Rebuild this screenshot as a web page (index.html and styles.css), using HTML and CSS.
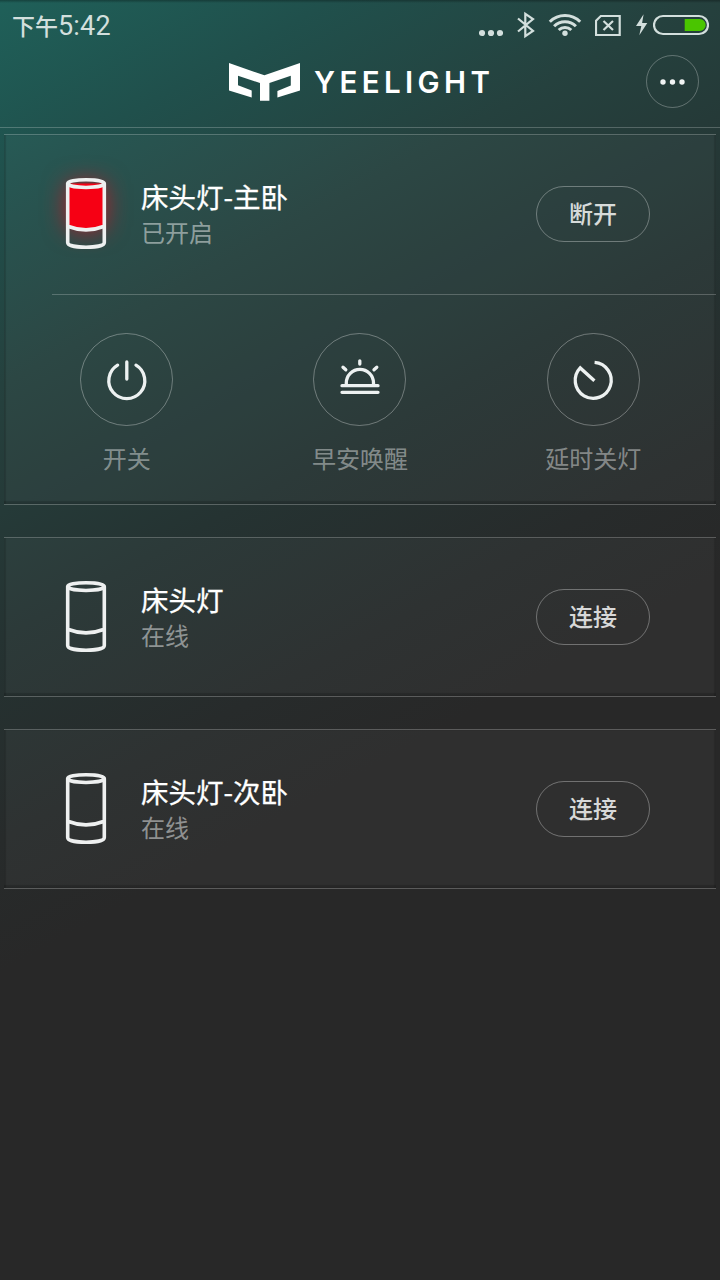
FILE: index.html
```html
<!DOCTYPE html>
<html lang="zh-CN">
<head>
    <meta charset="UTF-8">
    <meta name="viewport" content="width=device-width, initial-scale=1.0">
    <title>Yeelight</title>
    <link rel="stylesheet" href="styles.css">
</head>
<body>
    <!-- Status bar -->
    <div class="status-bar">
        <div class="time">下午<span>5:42</span></div>
        <div class="status-icons">
            <svg class="dots" width="24" height="50" viewBox="479 0 24 50">
                <circle cx="482" cy="33" r="3.1"/><circle cx="491" cy="33" r="3.1"/><circle cx="500" cy="33" r="3.1"/>
            </svg>
            <svg class="bluetooth line" width="18" height="50" viewBox="517 0 18 50">
                <path d="M518 18.5l15 12.5-7.7 5.2V13.8l7.7 5.2-15 12.5"/>
            </svg>
            <svg class="wifi" width="34" height="50" viewBox="547.5 0 34 50">
                <circle cx="564.5" cy="33.3" r="2.7"/>
                <path class="arc" d="M549.3 21.8a21.5 21.5 0 0 1 30.4 0M553.6 26.2a15.4 15.4 0 0 1 21.8 0M558.2 30a9 9 0 0 1 12.6 0"/>
            </svg>
            <svg class="sim line" width="26" height="50" viewBox="595 0 26 50">
                <path d="M596 20.8l4.8-4.8h18.9v19h-23.7zM603.5 21l9.5 9M613 21l-9.5 9"/>
            </svg>
            <svg class="bolt" width="12" height="50" viewBox="636 0 12 50">
                <path d="M643.6 14.3l-7.6 11.7h5.3l-2 9.2 8-12.2h-5.2z"/>
            </svg>
            <svg class="battery line" width="56" height="50" viewBox="653 0 56 50">
                <rect x="654" y="16" width="54" height="18" rx="9"/>
                <path class="level" d="M684.7 19h15a6 6 0 0 1 0 12h-15z"/>
            </svg>
        </div>
    </div>

    <!-- Header -->
    <div class="header">
        <div class="logo">
            <svg width="71" height="38" viewBox="0 0 71 38">
                <path d="M0 0l35.4 12.3L71 0v27.6L48.4 34.4V28l13.4-5.6v-9.6L40.4 20v17.8H31V20L9 12.8v9.4L22.7 27.6v6.8L0 27.4z"/>
            </svg>
            <span class="logo-text">YEELIGHT</span>
        </div>
        <button class="more">
            <svg width="25" height="6" viewBox="0 0 25 6">
                <circle cx="3" cy="3" r="2.7"/><circle cx="12.5" cy="3" r="2.7"/><circle cx="22" cy="3" r="2.7"/>
            </svg>
        </button>
    </div>

    <!-- Device list -->
    <div class="devices">
        <div class="card">
            <div class="device">
                <svg class="lamp" width="40" height="71" viewBox="0 0 40 71">
                    <path class="light" d="M1.5 5.5V48.5Q20 56 38.5 48.5V5.5z"/>
                    <path d="M1.7 5.5V64.5c0 6.4 36.6 6.4 36.6 0V5.5M1.7 48.3Q20 55.5 38.3 48.3"/>
                    <ellipse cx="20" cy="5.6" rx="18.3" ry="3.9"/>
                </svg>
                <div class="info">
                    <div class="name">床头灯-主卧</div>
                    <div class="state">已开启</div>
                </div>
                <button class="connect">断开</button>
            </div>
            <div class="actions">
                <div class="action">
                    <svg width="93" height="93" viewBox="0 0 93 93">
                        <circle class="ring" cx="46.5" cy="46.5" r="46"/>
                        <path d="M37.6 32.2a18 18 0 1 0 18.4 0M46.8 29v17"/>
                    </svg>
                    <div class="label">开关</div>
                </div>
                <div class="action">
                    <svg width="93" height="93" viewBox="0 0 93 93">
                        <circle class="ring" cx="46.5" cy="46.5" r="46"/>
                        <path d="M29 52.7h36M29 59.3h36M33.3 52v-2a13.6 13.6 0 0 1 27.2 0v2M46.8 27.8v3.3M30 34.2l2.8 2.6M63.8 34.2l-2.8 2.6"/>
                    </svg>
                    <div class="label">早安唤醒</div>
                </div>
                <div class="action">
                    <svg width="93" height="93" viewBox="0 0 93 93">
                        <circle class="ring" cx="46.5" cy="46.5" r="46"/>
                        <path class="timer" d="M47.6 29.4a18 18 0 1 1-14.4 5.5L47.4 47.7"/>
                    </svg>
                    <div class="label">延时关灯</div>
                </div>
            </div>
        </div>

        <div class="card">
            <div class="device">
                <svg class="lamp" width="40" height="71" viewBox="0 0 40 71">
                    <path d="M1.7 5.5V64.5c0 6.4 36.6 6.4 36.6 0V5.5M1.7 48.3Q20 55.5 38.3 48.3"/>
                    <ellipse cx="20" cy="5.6" rx="18.3" ry="3.9"/>
                </svg>
                <div class="info">
                    <div class="name">床头灯</div>
                    <div class="state">在线</div>
                </div>
                <button class="connect">连接</button>
            </div>
        </div>

        <div class="card">
            <div class="device">
                <svg class="lamp" width="40" height="71" viewBox="0 0 40 71">
                    <path d="M1.7 5.5V64.5c0 6.4 36.6 6.4 36.6 0V5.5M1.7 48.3Q20 55.5 38.3 48.3"/>
                    <ellipse cx="20" cy="5.6" rx="18.3" ry="3.9"/>
                </svg>
                <div class="info">
                    <div class="name">床头灯-次卧</div>
                    <div class="state">在线</div>
                </div>
                <button class="connect">连接</button>
            </div>
        </div>
    </div>
</body>
</html>
```

FILE: styles.css
```css
* {
    box-sizing: border-box;
}

body {
    margin: 0;
    min-height: 1280px;
    font-family: "Noto Sans CJK SC", sans-serif;
    color: #fff;
    background: #282828 linear-gradient(151deg, #1f6059 0%, #20504c 11%, #25413e 23%, #253332 38%, #272b2b 50%, #282828 58%) no-repeat;
    overflow: hidden;
}

svg {
    display: block;
    flex: none;
}

button {
    padding: 0;
    background: none;
    color: inherit;
    font-family: inherit;
}

/* Status bar */
.status-bar {
    height: 50px;
    padding: 0 11px 0 12px;
    display: flex;
    justify-content: space-between;
    align-items: center;
    color: #d3dfdd;
    background: linear-gradient(rgba(0, 0, 0, 0.3), transparent 3px);
}

.time {
    font-size: 23px;
    font-weight: 500;
    line-height: 50px;
}

.time span {
    font-family: Roboto, sans-serif;
    font-size: 27px;
    font-weight: 400;
    letter-spacing: 0.2px;
}

.status-icons {
    display: flex;
    fill: #d3dfdd;
}

.status-icons .line,
.arc {
    fill: none;
    stroke: #d3dfdd;
    stroke-width: 2.2;
}

.status-icons .arc {
    stroke-width: 3;
}

.bluetooth { margin-left: 14px; }
.wifi { margin-left: 12.5px; }
.sim { margin-left: 13.5px; }
.bolt { margin-left: 15px; }
.battery { margin-left: 5px; }

.level {
    fill: #4ac500;
    stroke: none;
}

/* Header */
.header {
    height: 78px;
    padding: 5px 21px 19px;
    display: grid;
    grid-template-columns: 1fr auto 1fr;
    align-items: center;
    border-bottom: 1px solid rgba(255, 255, 255, 0.22);
}

.logo {
    grid-column: 2;
    display: flex;
    align-items: center;
    gap: 14px;
    fill: #fff;
}

.logo-text {
    width: 177px;
    font-family: Inter, sans-serif;
    font-size: 29.5px;
    font-weight: 600;
    line-height: 38px;
    letter-spacing: 4.4px;
    white-space: nowrap;
}

.more {
    width: 53px;
    height: 53px;
    justify-self: end;
    display: flex;
    justify-content: center;
    align-items: center;
    border: 1px solid rgba(255, 255, 255, 0.28);
    border-radius: 50%;
    fill: #f1f4f4;
}

/* Device cards */
.devices {
    padding: 6px 4px 0;
    display: flex;
    flex-direction: column;
    gap: 32px;
}

.card {
    border-top: 1px solid rgba(255, 255, 255, 0.24);
    border-bottom: 1px solid rgba(255, 255, 255, 0.24);
    padding-bottom: 1px;
    background: rgba(255, 255, 255, 0.035);
    background-clip: padding-box;
    box-shadow: inset 2px 0 1px rgba(0, 0, 0, 0.14), inset -2px 0 1px rgba(0, 0, 0, 0.14), inset 0 -3px 1px rgba(0, 0, 0, 0.16);
}

.device {
    height: 157px;
    padding: 0 66px 0 62px;
    display: flex;
    align-items: center;
}

.lamp {
    fill: none;
    stroke: #eef0f0;
    stroke-width: 3.6;
    overflow: visible;
}

.light {
    fill: #f60014;
    stroke: none;
    filter: drop-shadow(0 0 12px rgba(255, 0, 20, 0.7));
}

.info {
    flex: 1;
    margin-left: 35px;
}

.name {
    font-size: 27.5px;
    line-height: 36px;
    -webkit-text-stroke: 0.3px #fff;
}

.state {
    font-size: 24px;
    line-height: 35px;
    color: rgba(255, 255, 255, 0.48);
}

.connect {
    width: 114px;
    height: 56px;
    padding-bottom: 2px;
    border: 1px solid rgba(255, 255, 255, 0.32);
    border-radius: 28px;
    font-size: 24px;
    font-weight: 500;
    color: rgba(255, 255, 255, 0.82);
}

/* Shortcuts */
.actions {
    height: 209px;
    margin-top: 2px;
    padding: 38px 6px 0;
    display: flex;
    position: relative;
}

.actions::before {
    content: '';
    position: absolute;
    top: 0;
    left: 48px;
    right: 0;
    height: 1px;
    background: rgba(255, 255, 255, 0.22);
}

.action {
    flex: 1;
    display: flex;
    flex-direction: column;
    align-items: center;
    padding-top: 1px;
}

.action path {
    fill: none;
    stroke: #edf1f1;
    stroke-width: 3.3;
    stroke-linecap: round;
    stroke-linejoin: round;
}

.action .timer {
    stroke-linecap: butt;
    stroke-linejoin: miter;
}

.ring {
    fill: none;
    stroke: rgba(255, 255, 255, 0.32);
}

.label {
    margin-top: 14px;
    font-size: 24px;
    line-height: 36px;
    color: rgba(255, 255, 255, 0.43);
}
```
